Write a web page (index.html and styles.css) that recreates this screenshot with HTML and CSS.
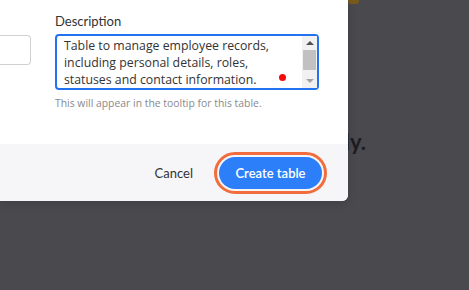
FILE: index.html
```html
<!DOCTYPE html>
<html>
<head>
<meta charset="utf-8">
<link rel="stylesheet" href="styles.css">
</head>
<body>
<div class="page">
  <div class="accent"></div>
  <h1 class="hero">Get started quickly.</h1>
</div>
<div class="modal">
  <div class="modal-body">
    <div class="field-left">
      <div class="input"></div>
    </div>
    <div class="field-desc">
      <div class="label">Description</div>
      <div class="textarea">
        <div class="ta-text">
          <span class="ta-line">Table to manage employee records,</span>
          <span class="ta-line">including personal details, roles,</span>
          <span class="ta-line">statuses <span class="ul">and</span> contact information.</span>
        </div>
        <span class="dot"></span>
        <div class="scrollbar">
          <div class="arrow up"></div>
          <div class="thumb"></div>
          <div class="arrow down"></div>
        </div>
      </div>
      <div class="help">This will appear in the tooltip for this table.</div>
    </div>
  </div>
  <div class="modal-footer">
    <span class="cancel">Cancel</span>
    <button class="create">Create table</button>
  </div>
</div>
</body>
</html>
```

FILE: styles.css
```css
html, body {
  margin: 0;
  padding: 0;
  width: 469px;
  height: 290px;
  overflow: hidden;
  background: #4a494e;
  font-family: "Lato", "Noto Sans", sans-serif;
}
.page {
  position: relative;
  height: 290px;
}
.accent {
  width: 11px;
  height: 4px;
  margin-left: 348px;
  background: #7a5a1c;
  border-radius: 0 0 3px 3px;
}
.hero {
  margin: 0;
  padding-top: 124px;
  width: 366px;
  text-align: right;
  font-size: 22px;
  font-weight: 700;
  color: #1e1d22;
}
.modal {
  position: absolute;
  left: 0;
  top: 0;
  width: 348px;
  background: #fff;
  border-radius: 0 0 6px 0;
  overflow: hidden;
  box-shadow: 0 2px 10px rgba(0,0,0,0.15);
}
.modal-body {
  height: 144px;
  box-sizing: border-box;
  padding-top: 12px;
  display: flex;
  gap: 24px;
}
.field-left {
  width: 31px;
  flex: none;
}
.input {
  margin-top: 23px;
  margin-left: -10px;
  height: 28px;
  border: 1px solid #d0d0d3;
  border-left: none;
  border-radius: 0 4px 4px 0;
}
.field-desc {
  width: 264px;
  flex: none;
}
.label {
  font-size: 13px;
  line-height: 18px;
  color: #333;
}
.textarea {
  position: relative;
  margin-top: 4px;
  height: 52px;
  border: 2px solid #2372f0;
  border-radius: 4px;
  display: flex;
}
.ta-text {
  flex: 1;
  min-width: 0;
  padding: 1px 0 0 7px;
  font-family: "Open Sans", "Noto Sans", sans-serif;
  font-size: 12.3px;
  line-height: 17px;
  color: #333;
  white-space: nowrap;
  overflow: hidden;
}
.ta-line { display: block; }
.ul {
  text-decoration: underline;
  text-decoration-color: #7b7bff;
  text-underline-offset: 4px;
}
.dot {
  position: absolute;
  left: 222px;
  top: 38px;
  width: 7px;
  height: 7px;
  border-radius: 50%;
  background: #f10d0d;
}
.scrollbar {
  width: 15px;
  flex: none;
  background: #f1f1f1;
  display: flex;
  flex-direction: column;
  align-items: center;
}
.arrow {
  height: 14px;
  width: 15px;
  display: flex;
  align-items: center;
  justify-content: center;
}
.arrow.up::before {
  content: "";
  border-left: 4px solid transparent;
  border-right: 4px solid transparent;
  border-bottom: 4px solid #505050;
}
.arrow.down::before {
  content: "";
  border-left: 4px solid transparent;
  border-right: 4px solid transparent;
  border-top: 4px solid #a3a3a3;
}
.thumb {
  width: 13px;
  height: 20px;
  background: #c1c1c1;
  margin-bottom: 4px;
}
.help {
  margin-top: 6px;
  font-family: "Open Sans", "Noto Sans", sans-serif;
  font-size: 10.4px;
  line-height: 14px;
  color: #8a8a8e;
}
.modal-footer {
  height: 57px;
  background: #f6f6f8;
  display: flex;
  align-items: center;
  justify-content: flex-end;
  padding-right: 26px;
  gap: 26px;
}
.cancel {
  font-size: 13px;
  color: #333;
  margin-top: 1px;
}
.create {
  height: 32px;
  width: 103px;
  border: none;
  border-radius: 16px;
  background: #2d7ff9;
  color: #fff;
  font-family: "Lato", "Noto Sans", sans-serif;
  font-size: 13px;
  font-weight: 600;
  outline: 3px solid #f26d3d;
  outline-offset: 2px;
  padding: 0;
  margin-top: 1px;
}
```
